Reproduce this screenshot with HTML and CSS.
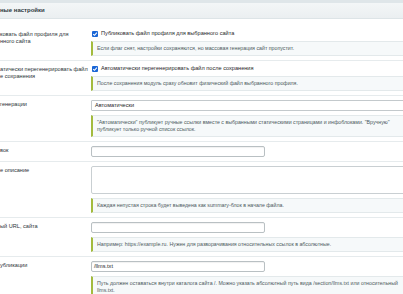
FILE: index.html
```html
<!DOCTYPE html>
<html lang="ru">
<head>
<meta charset="utf-8">
<link rel="stylesheet" href="styles.css">
</head>
<body>
<div class="page">
  <div class="topstrip"></div>
  <div class="section-head">ные настройки</div>

  <div class="row first">
    <div class="label">ковать файл профиля для<br>нного сайта</div>
    <div class="ctrl">
      <label class="check"><span class="box"><svg viewBox="0 0 6 6"><path d="M1.2 3.1 L2.5 4.3 L4.9 1.6" /></svg></span>Публиковать файл профиля для выбранного сайта</label>
      <div class="hint">Если флаг снят, настройки сохраняются, но массовая генерация сайт пропустит.</div>
    </div>
  </div>

  <div class="row">
    <div class="label">атически перегенерировать файл<br>е сохранения</div>
    <div class="ctrl">
      <label class="check"><span class="box"><svg viewBox="0 0 6 6"><path d="M1.2 3.1 L2.5 4.3 L4.9 1.6" /></svg></span>Автоматически перегенерировать файл после сохранения</label>
      <div class="hint">После сохранения модуль сразу обновит физический файл выбранного профиля.</div>
    </div>
  </div>

  <div class="row">
    <div class="label">генерации</div>
    <div class="ctrl">
      <div class="select">Автоматически</div>
      <div class="hint">"Автоматически" публикует ручные ссылки вместе с выбранными статическими страницами и инфоблоками. "Вручную" публикует только ручной список ссылок.</div>
    </div>
  </div>

  <div class="row">
    <div class="label">вок</div>
    <div class="ctrl">
      <div class="input"></div>
    </div>
  </div>

  <div class="row">
    <div class="label">е описание</div>
    <div class="ctrl">
      <div class="textarea"></div>
      <div class="hint">Каждая непустая строка будет выведена как summary-блок в начале файла.</div>
    </div>
  </div>

  <div class="row">
    <div class="label">ый URL, сайта</div>
    <div class="ctrl">
      <div class="input"></div>
      <div class="hint">Например: https://example.ru. Нужен для разворачивания относительных ссылок в абсолютные.</div>
    </div>
  </div>

  <div class="row">
    <div class="label">убликации</div>
    <div class="ctrl">
      <div class="input">/llms.txt</div>
      <div class="hint">Путь должен оставаться внутри каталога сайта /. Можно указать абсолютный путь вида /section/llms.txt или относительный llms.txt.</div>
    </div>
  </div>
</div>
</body>
</html>
```

FILE: styles.css
```css
html, body {
  margin: 0;
  padding: 0;
  background: #ffffff;
  overflow: hidden;
}
body {
  width: 403px;
  height: 294px;
  font-family: "Liberation Sans", Arial, sans-serif;
  font-size: 5.6px;
  color: #2b3337;
}
.page {
  width: 412px;
}
.topstrip {
  height: 3px;
  background: #dfe6e9;
}
.section-head {
  height: 15px;
  line-height: 15px;
  font-weight: bold;
  font-size: 6px;
  color: #2f3a3f;
  background: linear-gradient(#f3f6f7, #ebeff1);
  border-bottom: 1px solid #dde4e7;
}
.row {
  display: grid;
  grid-template-columns: 91px 1fr;
  padding: 4px 0 4px;
  border-bottom: 1px solid #e6ebed;
}
.row.first {
  padding-top: 11px;
}
.label {
  line-height: 7px;
  padding-right: 1px;
  padding-top: 1px;
  color: #2b3337;
  white-space: nowrap;
}
.ctrl {
  display: flex;
  flex-direction: column;
  gap: 4px;
}
.check {
  display: flex;
  align-items: center;
  gap: 3px;
  height: 7px;
  line-height: 7px;
  padding-left: 1px;
  color: #1f2629;
}
.box {
  width: 6px;
  height: 6px;
  border-radius: 1px;
  background: #1a66d6;
  display: flex;
}
.box svg {
  width: 6px;
  height: 6px;
}
.box path {
  fill: none;
  stroke: #ffffff;
  stroke-width: 1.1;
}
.hint {
  background: #f6f9fa;
  border: 1px solid #e3e9eb;
  border-left: 2px solid #a3bb3e;
  padding: 3px 5px 3px 4px;
  line-height: 7px;
  color: #4d5a60;
  font-size: 5.25px;
}
.select {
  height: 9px;
  line-height: 9px;
  border: 1px solid #c3c9cc;
  border-radius: 1px;
  padding-left: 3px;
  background: #ffffff;
  color: #1f2629;
}
.input {
  width: 170px;
  height: 9px;
  line-height: 9px;
  border: 1px solid #b9c0c3;
  border-radius: 2px;
  padding-left: 2px;
  background: #ffffff;
  box-shadow: inset 0 1px 1px rgba(0,0,0,0.06);
  color: #1f2629;
}
.textarea {
  height: 26px;
  border: 1px solid #c9cfd2;
  border-radius: 2px;
  background: #ffffff;
}
```
